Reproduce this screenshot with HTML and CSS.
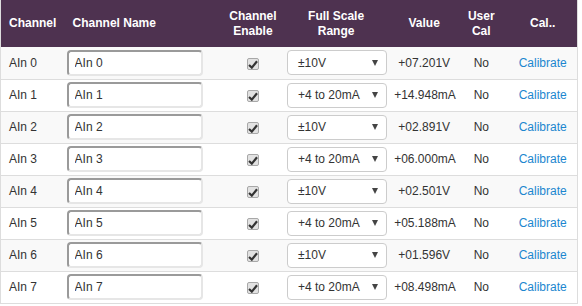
FILE: index.html
```html
<!DOCTYPE html>
<html lang="en">

<head>
  <meta charset="UTF-8">
  <title>Analog Inputs</title>
  <meta name="viewport" content="width=device-width, initial-scale=1">
  <link rel="stylesheet" href="styles.css">
</head>

<body>

  <!-- Analog input channel table -->
  <table class="ain-table">
    <colgroup>
      <col class="c-chan">
      <col class="c-name">
      <col class="c-enable">
      <col class="c-range">
      <col class="c-value">
      <col class="c-user">
      <col class="c-cal">
    </colgroup>
    <thead>
      <tr>
        <th class="left">Channel</th>
        <th class="left name-head">Channel Name</th>
        <th>Channel<br>Enable</th>
        <th>Full Scale<br>Range</th>
        <th>Value</th>
        <th>User<br>Cal</th>
        <th>Cal..</th>
      </tr>
    </thead>
    <tbody id="rows"></tbody>
  </table>

  <script>
    const channels = [
      { range: '±10V', value: '+07.201V' },
      { range: '+4 to 20mA', value: '+14.948mA' },
      { range: '±10V', value: '+02.891V' },
      { range: '+4 to 20mA', value: '+06.000mA' },
      { range: '±10V', value: '+02.501V' },
      { range: '+4 to 20mA', value: '+05.188mA' },
      { range: '±10V', value: '+01.596V' },
      { range: '+4 to 20mA', value: '+08.498mA' }
    ];

    const tbody = document.getElementById('rows');
    channels.forEach((ch, i) => {
      const tr = document.createElement('tr');
      tr.innerHTML = `
        <td class="left">AIn ${i}</td>
        <td class="left name-cell"><input class="name-input" type="text" value="AIn ${i}"></td>
        <td><span class="check"><svg width="10" height="9" viewBox="0 0 10 9"><path d="M1 5 L3.8 7.6 L9 1.2" fill="none" stroke="#333" stroke-width="2.2"/></svg></span></td>
        <td class="range-cell"><div class="range-select"><span>${ch.range}</span><span class="arrow"></span></div></td>
        <td>${ch.value}</td>
        <td>No</td>
        <td><a href="#" class="cal-link">Calibrate</a></td>`;
      tbody.appendChild(tr);
    });
  </script>

</body>

</html>
```

FILE: styles.css
```css
/* Basic Reset */
* {
  margin: 0;
  padding: 0;
  box-sizing: border-box;
}

body {
  font-family: "Liberation Sans", Arial, sans-serif;
  font-size: 12px;
  color: #333;
  background: white;
}

/* Table */
.ain-table {
  border-collapse: collapse;
  table-layout: fixed;
  width: 578px;
  border-left: 1px solid #ddd;
  border-right: 1px solid #ddd;
}

.c-chan { width: 64px; }
.c-name { width: 163px; }
.c-enable { width: 50px; }
.c-range { width: 116px; }
.c-value { width: 60px; }
.c-user { width: 54px; }
.c-cal { width: 69px; }

.ain-table th {
  background-color: #4e3250;
  color: white;
  font-weight: bold;
  height: 47px;
  line-height: 15px;
  text-align: center;
  vertical-align: middle;
  padding: 0;
}

.ain-table th.left {
  text-align: left;
  padding-left: 8px;
}

.ain-table th.name-head {
  padding-left: 8px;
}

.ain-table td {
  height: 32px;
  border-bottom: 1px solid #ddd;
  text-align: center;
  vertical-align: middle;
  padding: 0;
  white-space: nowrap;
}

.ain-table td.left {
  text-align: left;
  padding-left: 8px;
}

.ain-table td.name-cell {
  padding-left: 2px;
}

.ain-table tbody tr:nth-child(odd) {
  background-color: #f9f9f9;
}

/* Channel name input */
.name-input {
  display: block;
  width: 136px;
  height: 26px;
  padding: 0 6px;
  font-family: inherit;
  font-size: 12px;
  color: #333;
  background: white;
  border: 2px solid;
  border-color: #9a9a9a #e6e6e6 #e6e6e6 #9a9a9a;
  border-radius: 4px;
  outline: none;
}

/* Enable checkbox */
.check {
  display: inline-flex;
  align-items: center;
  justify-content: center;
  width: 12px;
  height: 12px;
  margin-top: 2px;
  background: #e2e2e2;
  border: 1px solid #a8a8a8;
  border-radius: 2px;
  vertical-align: middle;
}

/* Range select */
.ain-table td.range-cell {
  padding-left: 9px;
  text-align: left;
}

.range-select {
  width: 100px;
  height: 25px;
  display: flex;
  align-items: center;
  justify-content: space-between;
  padding: 0 8px 0 10px;
  background: white;
  border: 1px solid #ccc;
  border-radius: 4px;
}

.arrow {
  width: 0;
  height: 0;
  border-left: 3px solid transparent;
  border-right: 3px solid transparent;
  border-top: 6px solid #444;
}

.cal-link {
  color: #1c87cf;
  text-decoration: none;
}
```
